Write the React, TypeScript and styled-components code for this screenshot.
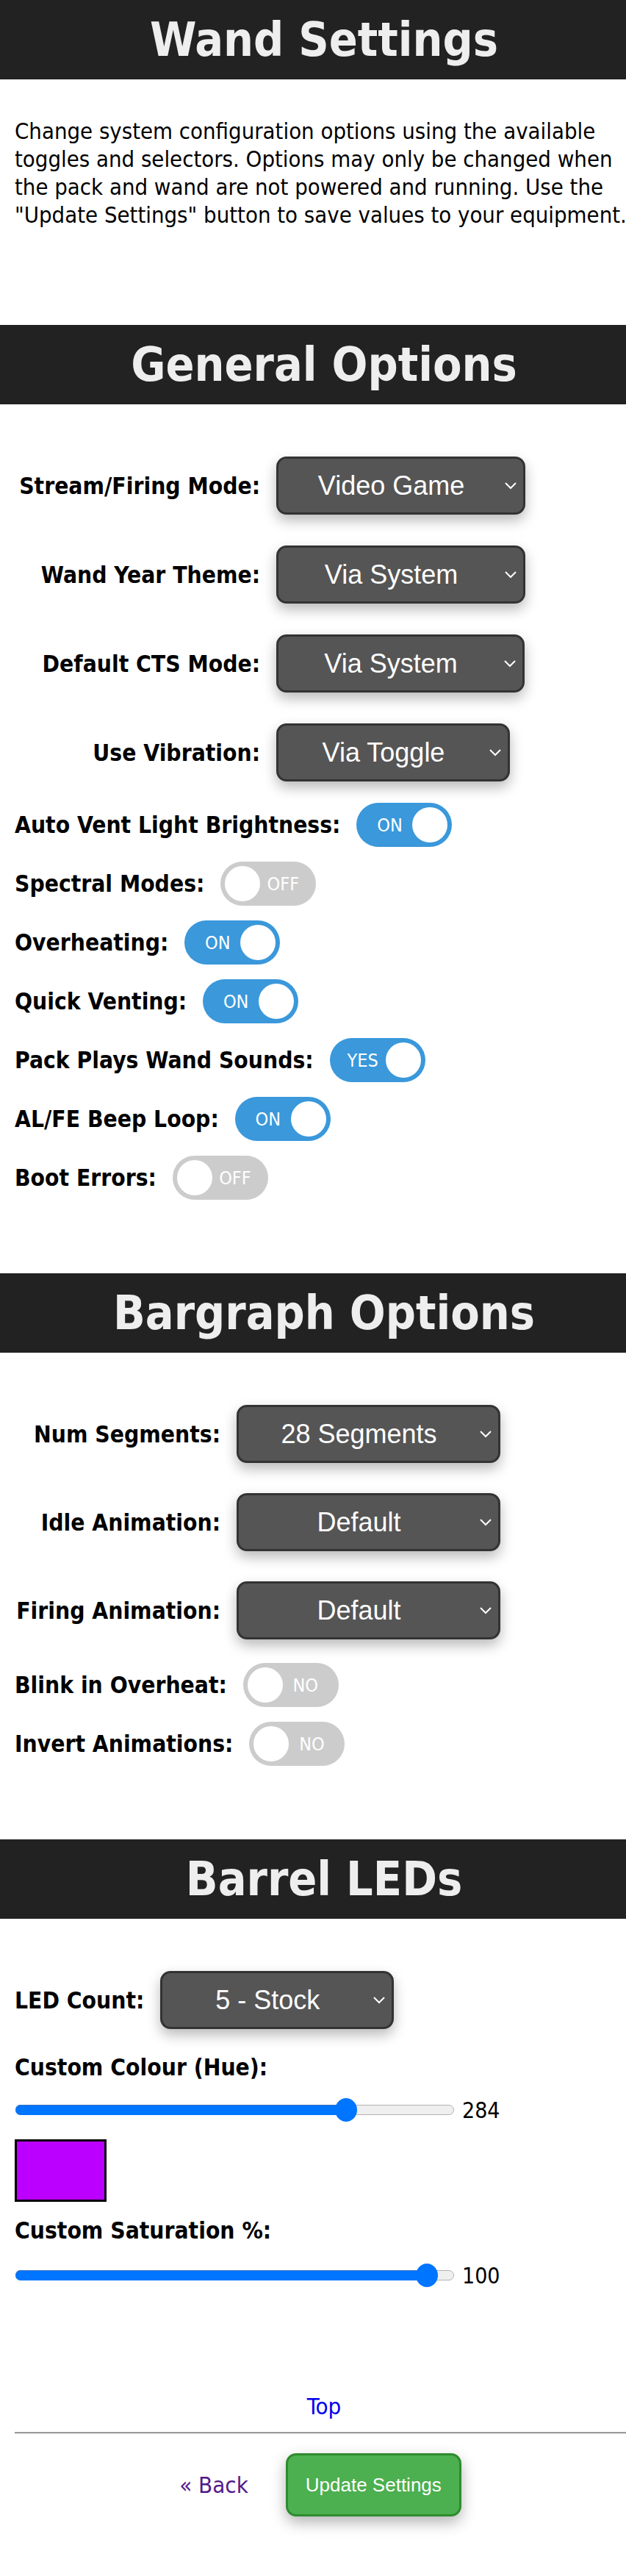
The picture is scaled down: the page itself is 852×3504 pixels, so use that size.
import React from "react";
import styled, { createGlobalStyle } from "styled-components";

const GlobalStyle = createGlobalStyle`
  html, body {
    margin: 0;
    padding: 0;
    background: #fff;
  }
  body {
    font-family: "DejaVu Sans Condensed", "DejaVu Sans", Verdana, sans-serif;
    font-stretch: condensed;
    color: #000;
    overflow-x: hidden;
  }
`;

const Page = styled.div`
  width: 852px;
  padding-bottom: 80px;
  overflow: hidden;
`;

const Banner = styled.div<{ $gap: number }>`
  margin-top: ${(p) => p.$gap}px;
  height: 108px;
  padding-left: 30px;
  background: #222;
  display: flex;
  align-items: center;
  justify-content: center;
`;

const BannerTitle = styled.h1`
  margin: 0;
  font-size: 64px;
  line-height: 1;
  font-weight: bold;
  color: #eee;
`;

const Content = styled.div`
  padding-left: 20px;
`;

const Intro = styled.p`
  margin: 51px 0 0;
  font-size: 30.8px;
  line-height: 38px;
  white-space: nowrap;
`;

const SectionBody = styled.div`
  padding: 71px 0 0 20px;
  display: flex;
  flex-direction: column;
`;

const SelectList = styled.div<{ $gap: number }>`
  display: flex;
  flex-direction: column;
  gap: ${(p) => p.$gap}px;
`;

const SelectRow = styled.div`
  display: flex;
  align-items: center;
  gap: 22px;
`;

const Label = styled.label<{ $width?: number }>`
  font-size: 31.5px;
  font-weight: bold;
  white-space: nowrap;
  ${(p) => (p.$width ? `width: ${p.$width}px; text-align: right; flex-shrink: 0;` : "")}
`;

const BlockLabel = styled.div<{ $mt: number }>`
  margin-top: ${(p) => p.$mt}px;
  font-size: 31.5px;
  line-height: 38px;
  font-weight: bold;
`;

const SelectBox = styled.div<{ $width: number }>`
  position: relative;
  box-sizing: border-box;
  width: ${(p) => p.$width}px;
  height: 79px;
  padding-right: 26px;
  background: #555;
  border: 3px solid #333;
  border-radius: 14px;
  box-shadow: 0 8px 18px rgba(0, 0, 0, 0.28);
  color: #fff;
  font-family: "Liberation Sans", Arial, sans-serif;
  font-size: 36px;
  display: flex;
  align-items: center;
  justify-content: center;
`;

const Chevron = styled.svg`
  position: absolute;
  right: 9px;
  top: 50%;
  margin-top: -5px;
`;

const ToggleList = styled.div<{ $mt: number }>`
  margin-top: ${(p) => p.$mt}px;
  display: flex;
  flex-direction: column;
  gap: 20px;
`;

const ToggleRow = styled.div`
  display: flex;
  align-items: center;
  gap: 22px;
`;

const SwitchTrack = styled.div<{ $on: boolean }>`
  position: relative;
  box-sizing: border-box;
  width: 130px;
  height: 60px;
  padding: 6px;
  border-radius: 30px;
  background: ${(p) => (p.$on ? "#3a98db" : "#cccccc")};
  display: flex;
  align-items: center;
  justify-content: ${(p) => (p.$on ? "flex-end" : "flex-start")};
  flex-shrink: 0;
`;

const SwitchKnob = styled.span`
  width: 48px;
  height: 48px;
  border-radius: 50%;
  background: #fff;
`;

const SwitchText = styled.span<{ $on: boolean }>`
  position: absolute;
  top: 0;
  bottom: 0;
  width: 90px;
  ${(p) => (p.$on ? "left: 0;" : "right: 0;")}
  display: flex;
  align-items: center;
  justify-content: center;
  color: #fff;
  font-size: 25px;
`;

const SliderRow = styled.div<{ $mt: number }>`
  margin-top: ${(p) => p.$mt}px;
  height: 40px;
  display: flex;
  align-items: center;
  gap: 11px;
`;

const SliderTrack = styled.div`
  position: relative;
  box-sizing: border-box;
  width: 597px;
  height: 14px;
  margin-left: 1px;
  border-radius: 7px;
  background: #efefef;
  border: 1px solid #b2b2b2;
`;

const SliderFill = styled.div`
  position: absolute;
  left: -1px;
  top: -1px;
  bottom: -1px;
  border-radius: 7px;
  background: #0075ff;
  box-shadow: inset 0 1px 0 #3f72c0;
`;

const SliderThumb = styled.div`
  position: absolute;
  top: 50%;
  width: 30px;
  height: 32px;
  margin: -16px 0 0 -15px;
  border-radius: 50%;
  background: #0075ff;
`;

const SliderValue = styled.span`
  font-size: 30px;
`;

const Swatch = styled.div<{ $mt: number }>`
  margin-top: ${(p) => p.$mt}px;
  box-sizing: border-box;
  width: 125px;
  height: 85px;
  border: 3px solid #000;
`;

const TopLink = styled.a`
  display: block;
  margin-top: 140px;
  padding-left: 10px;
  text-align: center;
  font-size: 31px;
  line-height: 36px;
  color: #0000ee;
  text-decoration: none;
`;

const Rule = styled.hr`
  margin: 17px 0 0;
  border: 0;
  border-top: 2px solid #999;
  border-bottom: 1px solid #eee;
`;

const Footer = styled.div`
  margin-top: 26px;
  display: flex;
  justify-content: center;
  align-items: center;
  gap: 51px;
`;

const BackLink = styled.a`
  font-size: 31px;
  color: #551a8b;
  text-decoration: none;
`;

const UpdateButton = styled.button`
  box-sizing: border-box;
  width: 239px;
  height: 86px;
  background: #4caf50;
  border: 3px solid #2e8b2e;
  border-radius: 14px;
  box-shadow: 0 8px 20px rgba(0, 0, 0, 0.3);
  color: #fff;
  font-family: "Liberation Sans", Arial, sans-serif;
  font-size: 26px;
  padding: 0;
`;

type SelectItem = { label: string; value: string; width: number };
type ToggleItem = { label: string; on: boolean; text: string };

const generalSelects: SelectItem[] = [
  { label: "Stream/Firing Mode:", value: "Video Game", width: 339 },
  { label: "Wand Year Theme:", value: "Via System", width: 339 },
  { label: "Default CTS Mode:", value: "Via System", width: 338 },
  { label: "Use Vibration:", value: "Via Toggle", width: 318 },
];

const generalToggles: ToggleItem[] = [
  { label: "Auto Vent Light Brightness:", on: true, text: "ON" },
  { label: "Spectral Modes:", on: false, text: "OFF" },
  { label: "Overheating:", on: true, text: "ON" },
  { label: "Quick Venting:", on: true, text: "ON" },
  { label: "Pack Plays Wand Sounds:", on: true, text: "YES" },
  { label: "AL/FE Beep Loop:", on: true, text: "ON" },
  { label: "Boot Errors:", on: false, text: "OFF" },
];

const bargraphSelects: SelectItem[] = [
  { label: "Num Segments:", value: "28 Segments", width: 359 },
  { label: "Idle Animation:", value: "Default", width: 359 },
  { label: "Firing Animation:", value: "Default", width: 359 },
];

const bargraphToggles: ToggleItem[] = [
  { label: "Blink in Overheat:", on: false, text: "NO" },
  { label: "Invert Animations:", on: false, text: "NO" },
];

const Select = ({ value, width }: { value: string; width: number }) => (
  <SelectBox $width={width}>
    {value}
    <Chevron width="16" height="10" viewBox="0 0 16 10">
      <polyline points="1,1 8,8 15,1" fill="none" stroke="#fff" strokeWidth="2" />
    </Chevron>
  </SelectBox>
);

const Switch = ({ on, text }: { on: boolean; text: string }) => (
  <SwitchTrack $on={on}>
    <SwitchText $on={on}>{text}</SwitchText>
    <SwitchKnob />
  </SwitchTrack>
);

const Slider = ({ value, pos, mt }: { value: number; pos: number; mt: number }) => {
  const center = 15 + pos * 567;
  return (
    <SliderRow $mt={mt}>
      <SliderTrack>
        <SliderFill style={{ width: center }} />
        <SliderThumb style={{ left: center }} />
      </SliderTrack>
      <SliderValue>{value}</SliderValue>
    </SliderRow>
  );
};

const SelectGroup = ({ items, labelWidth, gap }: { items: SelectItem[]; labelWidth?: number; gap: number }) => (
  <SelectList $gap={gap}>
    {items.map((s) => (
      <SelectRow key={s.label}>
        <Label $width={labelWidth}>{s.label}</Label>
        <Select value={s.value} width={s.width} />
      </SelectRow>
    ))}
  </SelectList>
);

const ToggleGroup = ({ items, mt }: { items: ToggleItem[]; mt: number }) => (
  <ToggleList $mt={mt}>
    {items.map((t) => (
      <ToggleRow key={t.label}>
        <Label>{t.label}</Label>
        <Switch on={t.on} text={t.text} />
      </ToggleRow>
    ))}
  </ToggleList>
);

export default function App() {
  const hue = 284;
  return (
    <Page>
      <GlobalStyle />
      <Banner $gap={0}>
        <BannerTitle>Wand Settings</BannerTitle>
      </Banner>
      <Content>
        <Intro>
          Change system configuration options using the available
          <br />
          toggles and selectors. Options may only be changed when
          <br />
          the pack and wand are not powered and running. Use the
          <br />
          "Update Settings" button to save values to your equipment.
        </Intro>
      </Content>

      <Banner $gap={131}>
        <BannerTitle>General Options</BannerTitle>
      </Banner>
      <SectionBody>
        <SelectGroup items={generalSelects} labelWidth={334} gap={42} />
        <ToggleGroup items={generalToggles} mt={29} />
      </SectionBody>

      <Banner $gap={100}>
        <BannerTitle>Bargraph Options</BannerTitle>
      </Banner>
      <SectionBody>
        <SelectGroup items={bargraphSelects} labelWidth={280} gap={41} />
        <ToggleGroup items={bargraphToggles} mt={32} />
      </SectionBody>

      <Banner $gap={100}>
        <BannerTitle>Barrel LEDs</BannerTitle>
      </Banner>
      <SectionBody>
        <SelectRow>
          <Label>LED Count:</Label>
          <Select value="5 - Stock" width={318} />
        </SelectRow>
        <BlockLabel $mt={33}>Custom Colour (Hue):</BlockLabel>
        <Slider value={hue} pos={0.765} mt={19} />
        <Swatch $mt={20} style={{ background: `hsl(${hue}, 100%, 50%)` }} />
        <BlockLabel $mt={20}>Custom Saturation %:</BlockLabel>
        <Slider value={100} pos={0.96} mt={22} />
      </SectionBody>

      <Content>
        <TopLink href="#top">Top</TopLink>
        <Rule />
        <Footer>
          <BackLink href="#back">« Back</BackLink>
          <UpdateButton type="button">Update Settings</UpdateButton>
        </Footer>
      </Content>
    </Page>
  );
}
